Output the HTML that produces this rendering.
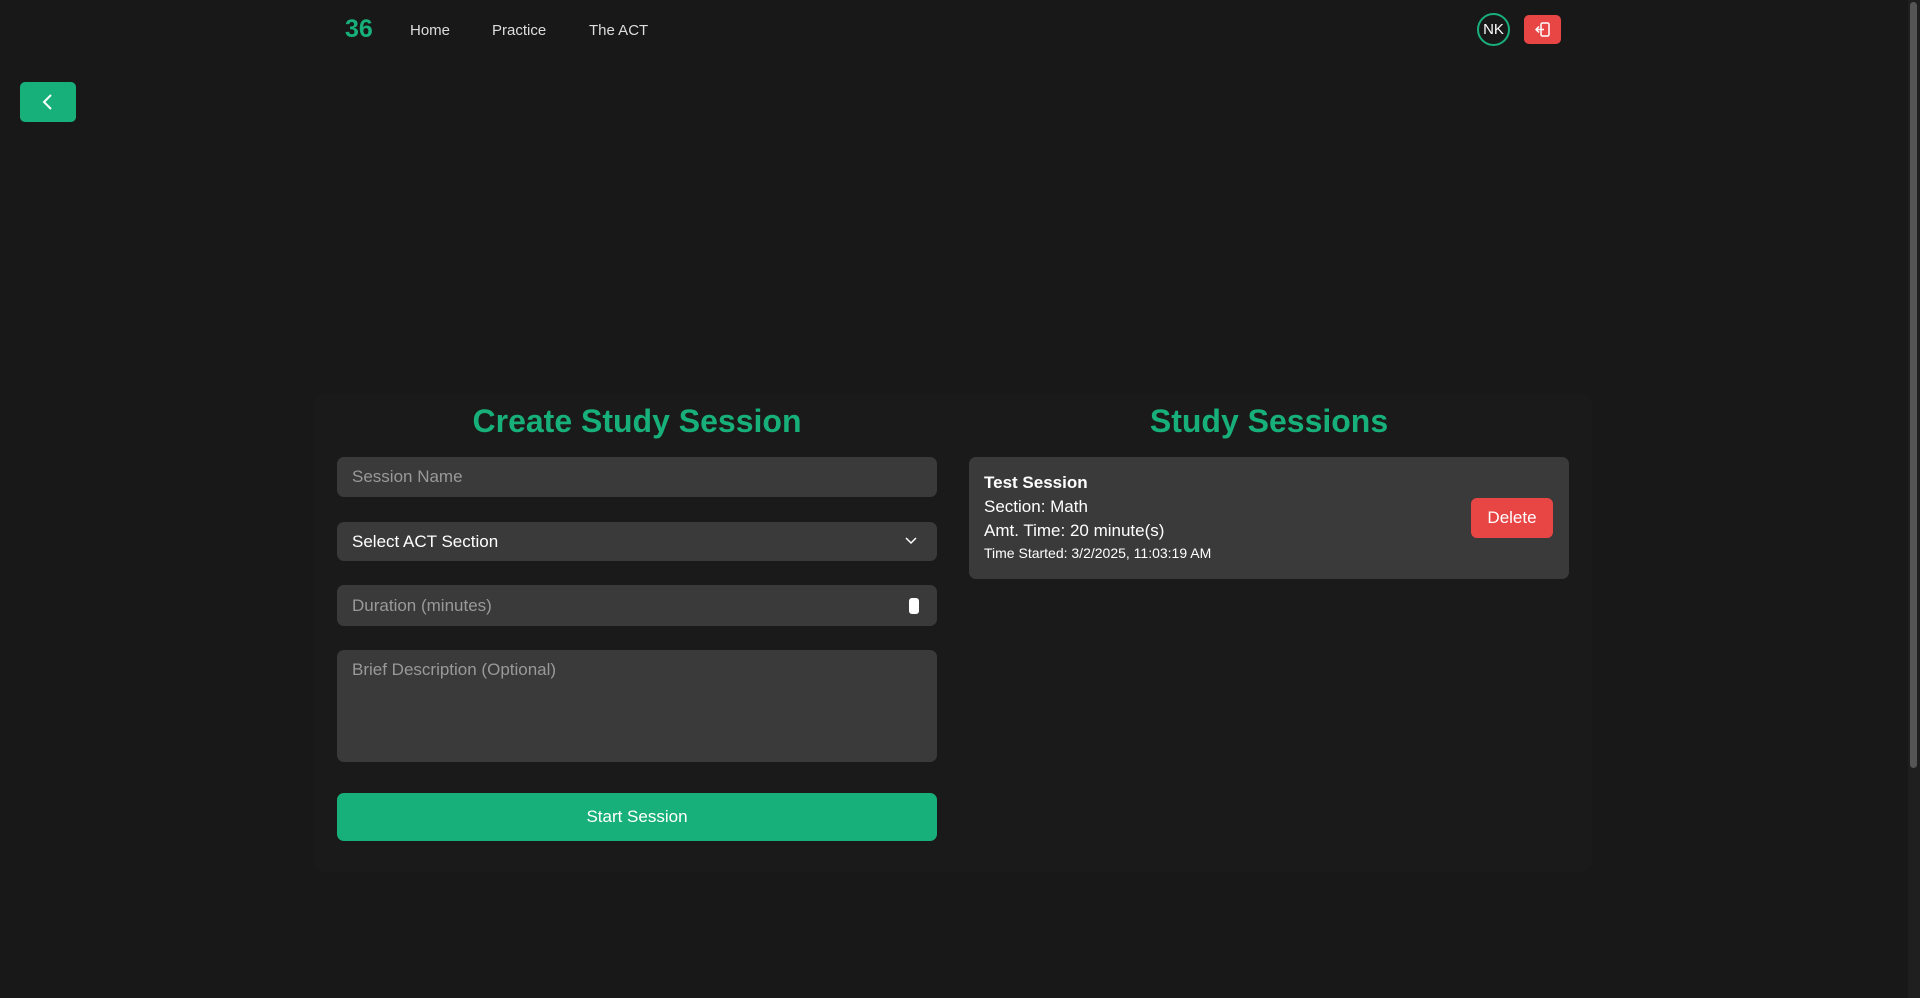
<!DOCTYPE html>
<html><head><style>
*{box-sizing:border-box;margin:0;padding:0}
body{width:1920px;height:998px;background:#181818;font-family:"Liberation Sans",sans-serif;color:#eee;position:relative;overflow:hidden}
.a{position:absolute}
.logo{left:345px;top:15px;font-size:25px;font-weight:bold;color:#18b07a}
.nav{top:22px;font-size:15px;color:#ddd}
.nk{left:1477px;top:13px;width:33px;height:33px;border:2px solid #18b07a;border-radius:50%;font-size:15px;text-align:center;line-height:29px;color:#fff}
.out{left:1524px;top:15px;width:37px;height:29px;background:#e84545;border-radius:5px}
.back{left:20px;top:82px;width:56px;height:40px;background:#18b07a;border-radius:5px}
.sb{left:1908px;top:0;width:12px;height:998px;background:#1f1f1f}
.thumb{left:1910px;top:2px;width:7px;height:766px;background:#555;border-radius:4px}
.panel{left:313px;top:394px;width:1279px;height:478px;background:#1a1a1a;border-radius:12px}
h1{position:absolute;font-size:32px;font-weight:bold;color:#18b07a;text-align:center;width:600px;top:403px}
.in{left:337px;width:600px;background:#3a3a3a;border-radius:7px;font-size:17px;color:#999;padding-left:15px}
.btn{left:337px;top:793px;width:600px;height:48px;background:#18b07a;border-radius:7px;color:#fff;font-size:17px;text-align:center;line-height:48px}
.card{left:969px;top:457px;width:600px;height:122px;background:#3a3a3a;border-radius:7px}
.del{left:1471px;top:498px;width:82px;height:40px;background:#e84545;border-radius:6px;color:#fff;font-size:17px;text-align:center;line-height:40px}
</style></head><body>
<div class="a logo">36</div>
<div class="a nav" style="left:410px">Home</div>
<div class="a nav" style="left:492px">Practice</div>
<div class="a nav" style="left:589px">The ACT</div>
<div class="a nk">NK</div>
<div class="a out"><svg width="37" height="29" viewBox="0 0 37 29"><rect x="17" y="8" width="8" height="13" rx="1.5" fill="none" stroke="#fff" stroke-width="1.5"/><path d="M20 14.5H12M15 11.5l-3 3 3 3" fill="none" stroke="#fff" stroke-width="1.5"/></svg></div>
<div class="a back"><svg width="56" height="40"><path d="M31 13l-7 7 7 7" fill="none" stroke="#fff" stroke-width="2"/></svg></div>
<div class="a sb"></div><div class="a thumb"></div>
<div class="a panel"></div>
<h1 style="left:337px">Create Study Session</h1>
<h1 style="left:969px">Study Sessions</h1>
<div class="a in" style="top:457px;height:40px;line-height:40px">Session Name</div>
<div class="a in" style="top:522px;height:39px;line-height:39px;color:#fff">Select ACT Section<svg class="a" style="right:20px;top:15px" width="12" height="8"><path d="M1 1l5 5 5-5" fill="none" stroke="#fff" stroke-width="1.5"/></svg></div>
<div class="a in" style="top:585px;height:41px;line-height:41px">Duration (minutes)<div class="a" style="right:18px;top:13px;width:10px;height:16px;background:#fff;border-radius:3px"></div></div>
<div class="a in" style="top:650px;height:112px;padding-top:10px">Brief Description (Optional)</div>
<div class="a btn">Start Session</div>
<div class="a card"></div>
<div class="a" style="left:984px;top:473px;font-size:17px;font-weight:bold;color:#fff">Test Session</div>
<div class="a" style="left:984px;top:497px;font-size:17px;color:#fff">Section: Math</div>
<div class="a" style="left:984px;top:521px;font-size:17px;color:#fff">Amt. Time: 20 minute(s)</div>
<div class="a" style="left:984px;top:545px;font-size:14px;color:#fff">Time Started: 3/2/2025, 11:03:19 AM</div>
<div class="a del">Delete</div>
</body></html>
